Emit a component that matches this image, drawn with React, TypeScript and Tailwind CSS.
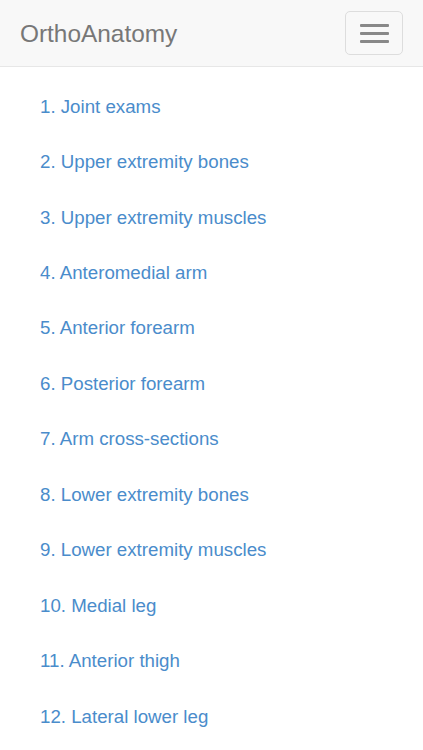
const items = [
  "1. Joint exams",
  "2. Upper extremity bones",
  "3. Upper extremity muscles",
  "4. Anteromedial arm",
  "5. Anterior forearm",
  "6. Posterior forearm",
  "7. Arm cross-sections",
  "8. Lower extremity bones",
  "9. Lower extremity muscles",
  "10. Medial leg",
  "11. Anterior thigh",
  "12. Lateral lower leg",
];

export default function App() {
  return (
    <div className="min-h-screen bg-white font-['Liberation_Sans',Arial,sans-serif]">
      {/* navbar */}
      <nav className="h-[67px] bg-[#f8f8f8] border-b border-[#e7e7e7] flex items-center justify-between pl-5 pr-5">
        <a className="text-[24.4px] text-[#777] pt-[3px]">OrthoAnatomy</a>
        <button className="w-[58px] h-[44px] border border-[#ddd] rounded-[5px] flex flex-col items-center justify-center gap-[5px]">
          <span className="block w-[29px] h-[3px] rounded-[1px] bg-[#888]" />
          <span className="block w-[29px] h-[3px] rounded-[1px] bg-[#888]" />
          <span className="block w-[29px] h-[3px] rounded-[1px] bg-[#888]" />
        </button>
      </nav>

      {/* chapter list */}
      <ul className="pt-[12px] pl-10">
        {items.map((item) => (
          <li key={item} className="h-[55.45px] flex items-center">
            <a className="text-[18.7px] text-[#4a8ccb]">{item}</a>
          </li>
        ))}
      </ul>
    </div>
  );
}
